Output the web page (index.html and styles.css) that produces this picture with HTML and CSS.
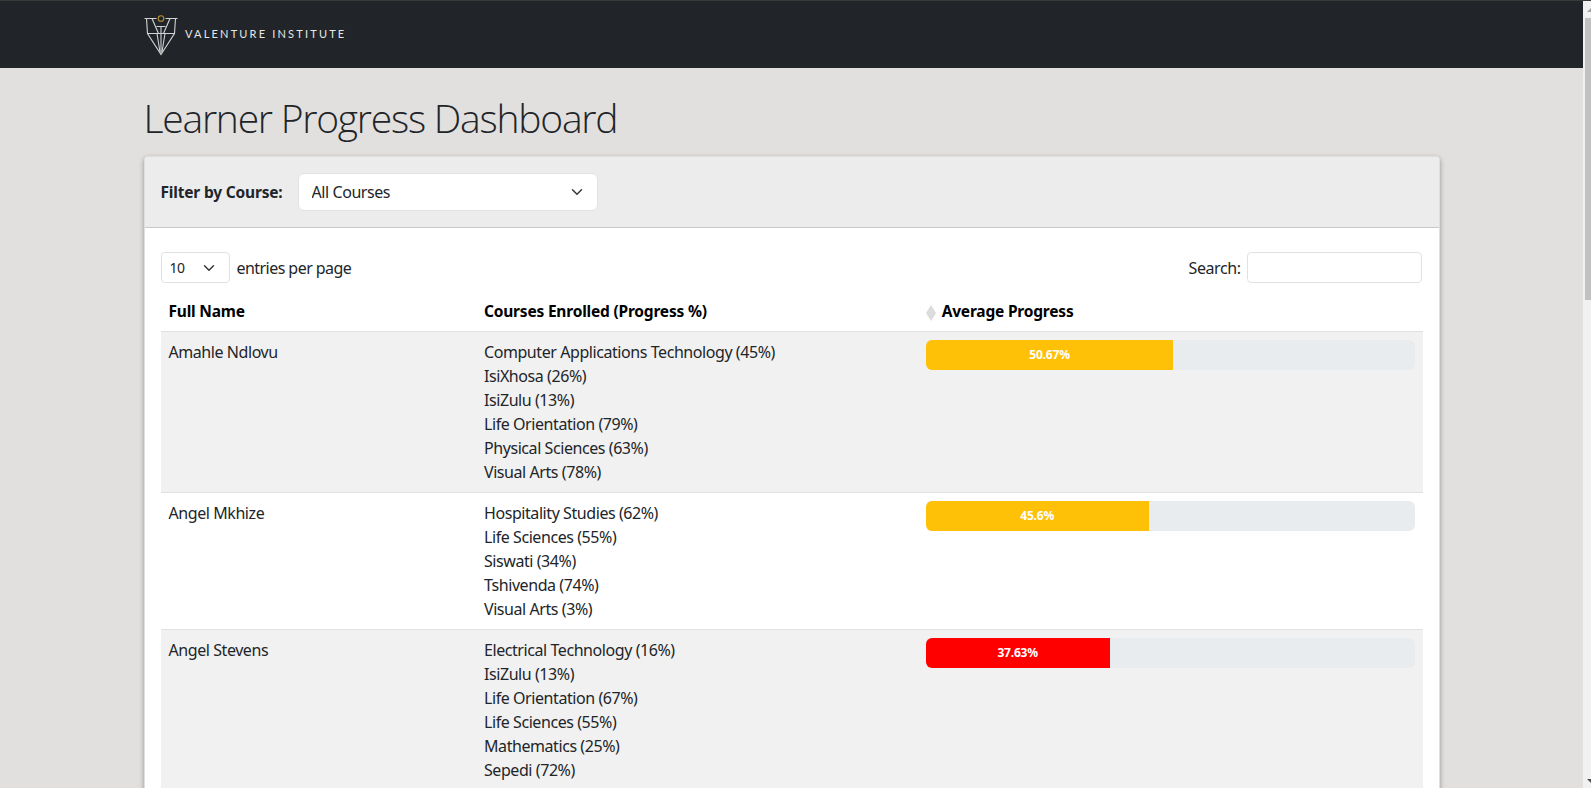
FILE: index.html
```html
<!DOCTYPE html>
<html lang="en">
<head>
<meta charset="utf-8">
<title>Learner Progress Dashboard</title>
<link rel="stylesheet" href="styles.css">
</head>
<body>
<div class="page">
  <header class="navbar">
    <svg class="logo" width="34" height="42" viewBox="0 0 34 42" fill="none" stroke="#d2d3d4" stroke-width="1.1">
      <path d="M0.5 4.5H12.5M21.5 4.5H33.5M12.5 12.5H21.5M17 12.5V39"/>
      <path d="M2.5 4.5L3.5 19.5L17 40.5L30.5 19.5L31.5 4.5"/>
      <path d="M8 4.5L14.5 19.5M26 4.5L19.5 19.5M13 19.5L16 38M21 19.5L18 38M3.5 19.5H30.5"/>
      <circle cx="17" cy="4.5" r="2.8" stroke="#b8912f"/>
    </svg>
    <span class="brand">VALENTURE INSTITUTE</span>
  </header>
  <main class="main">
    <h1 class="title">Learner Progress Dashboard</h1>
    <section class="card">
      <div class="card-header">
        <label class="filter-label" for="course">Filter by Course:</label>
        <select class="filter-select" id="course"><option>All Courses</option></select>
      </div>
      <div class="card-body">
        <div class="controls">
          <div class="per-page">
            <select class="length-select"><option>10</option></select>
            <span class="per-page-text">entries per page</span>
          </div>
          <div class="search">
            <label for="search">Search:</label>
            <input class="search-input" id="search" type="search">
          </div>
        </div>
        <table class="table">
          <colgroup><col class="col-name"><col class="col-courses"><col class="col-progress"></colgroup>
          <thead>
            <tr>
              <th>Full Name</th>
              <th>Courses Enrolled (Progress %)</th>
              <th><div class="sort-head"><svg class="sort-icon" width="10" height="16" viewBox="0 0 10 16"><path d="M5 0L10 8L5 16L0 8Z" fill="#dcdcdc"/></svg>Average Progress</div></th>
            </tr>
          </thead>
          <tbody>
            <tr class="striped">
              <td>Amahle Ndlovu</td>
              <td>Computer Applications Technology (45%)<br>IsiXhosa (26%)<br>IsiZulu (13%)<br>Life Orientation (79%)<br>Physical Sciences (63%)<br>Visual Arts (78%)</td>
              <td><div class="progress"><div class="bar bar-warning" style="width:50.67%">50.67%</div></div></td>
            </tr>
            <tr>
              <td>Angel Mkhize</td>
              <td>Hospitality Studies (62%)<br>Life Sciences (55%)<br>Siswati (34%)<br>Tshivenda (74%)<br>Visual Arts (3%)</td>
              <td><div class="progress"><div class="bar bar-warning" style="width:45.6%">45.6%</div></div></td>
            </tr>
            <tr class="striped">
              <td>Angel Stevens</td>
              <td>Electrical Technology (16%)<br>IsiZulu (13%)<br>Life Orientation (67%)<br>Life Sciences (55%)<br>Mathematics (25%)<br>Sepedi (72%)</td>
              <td><div class="progress"><div class="bar bar-danger" style="width:37.63%">37.63%</div></div></td>
            </tr>
          </tbody>
        </table>
      </div>
    </section>
  </main>
</div>
<div class="scrollbar">
  <span class="arrow arrow-up"></span>
  <span class="thumb"></span>
  <span class="arrow arrow-down"></span>
</div>
</body>
</html>
```
FILE: styles.css
```css
* { box-sizing: border-box; }
html, body { height: 100%; }
body {
  margin: 0;
  display: flex;
  overflow: hidden;
  background: #e1e0de;
  color: #212529;
  font-family: "Noto Sans", "Open Sans", sans-serif;
  font-size: 16px;
  line-height: 24px;
  letter-spacing: -0.43px;
  border-top: 1px solid #3a3a3a;
}
.page { flex: 1; min-width: 0; height: 100%; overflow: hidden; }
.navbar {
  height: 67px;
  background: #212529;
  display: flex;
  align-items: center;
  padding: 0 0 0 143.5px;
}
.logo { display: block; }
.brand {
  margin: 0 0 2px 7.5px;
  color: #e6e6e6;
  font-family: Lato, sans-serif;
  font-size: 11px;
  letter-spacing: 2.19px;
  line-height: 14px;
}
.main { width: 1296px; margin-left: 143.5px; padding-top: 24px; }
.title {
  margin: 0 0 14px;
  padding-top: 2px;
  font-family: "Open Sans", "Noto Sans", sans-serif;
  font-weight: 300;
  font-size: 39px;
  line-height: 48px;
  letter-spacing: -1.23px;
  color: #212529;
}
.card {
  background: #fff;
  border: 1px solid rgba(0,0,0,.125);
  border-radius: 4px;
  box-shadow: 0 2px 5px rgba(0,0,0,.35);
}
.card-header {
  display: flex;
  align-items: center;
  height: 71px;
  padding: 16px;
  background: #ececec;
  border-bottom: 1px solid #c9c9c9;
  border-radius: 3px 3px 0 0;
}
.filter-label { font-weight: 700; font-size: 15.5px; margin-right: 15px; letter-spacing: -0.18px; }
select, input { font-family: inherit; color: #212529; letter-spacing: inherit; }
.filter-select, .length-select {
  appearance: none;
  -webkit-appearance: none;
  background-color: #fff;
  background-image: url("data:image/svg+xml,%3Csvg xmlns='http://www.w3.org/2000/svg' viewBox='0 0 16 16'%3E%3Cpath fill='none' stroke='%23343a40' stroke-linecap='round' stroke-linejoin='round' stroke-width='2' d='M2 5l6 6 6-6'/%3E%3C/svg%3E");
  background-repeat: no-repeat;
  background-size: 16px 12px;
  border: 1px solid #dee2e6;
}
.filter-select {
  width: 300px;
  height: 38px;
  padding: 0 36px 0 13px;
  font-size: 16px;
  border-radius: 6px;
  background-position: right 12px center;
}
.card-body { padding: 24px 16px 16px; }
.controls { display: flex; justify-content: space-between; height: 31px; margin-bottom: 8px; }
.per-page, .search { display: flex; align-items: center; }
.per-page-text { letter-spacing: -0.55px; }
.length-select {
  width: 69px;
  height: 31px;
  padding: 0 28px 0 8px;
  font-size: 14px;
  border-radius: 4px;
  background-position: right 12px center;
  margin-right: 7px;
}
.search label { margin-right: 6px; }
.search-input {
  width: 175px;
  height: 31px;
  margin-right: 1px;
  border: 1px solid #dee2e6;
  border-radius: 4px;
  background: #fff;
  outline: none;
}
.table { width: 100%; border-collapse: collapse; table-layout: fixed; }
.col-name { width: 25%; }
.col-courses { width: 35%; }
.col-progress { width: 40%; }
.table th {
  text-align: left;
  padding: 8px;
  color: #000;
  font-weight: 700;
  font-size: 15.5px;
  letter-spacing: -0.2px;
  border-bottom: 1px solid #dee2e6;
}
.table td { padding: 8px; vertical-align: top; border-bottom: 1px solid #dee2e6; color: #212529; }
.striped td { background: #f1f1f1; }
.sort-head { display: flex; align-items: center; }
.sort-icon { margin: 3px 6px 0 0; flex: none; }
.progress {
  display: flex;
  height: 30px;
  background: #e9ecef;
  border-radius: 6px;
  overflow: hidden;
}
.bar {
  display: flex;
  align-items: center;
  justify-content: center;
  color: #fff;
  font-size: 12px;
  font-weight: 700;
  letter-spacing: -0.2px;
}
.bar-warning { background: #ffc107; }
.bar-danger { background: #f00; }
.scrollbar {
  flex: none;
  width: 8px;
  height: 100%;
  background: #f1f1f1;
  display: flex;
  flex-direction: column;
  align-items: flex-start;
  overflow: hidden;
}
.arrow {
  display: block;
  flex: none;
  width: 0;
  height: 0;
  border-left: 4px solid transparent;
  border-right: 4px solid transparent;
}
.arrow-up { margin-top: 7px; margin-left: 4px; border-bottom: 4px solid #a3a3a3; }
.thumb { flex: none; width: 6px; height: 282px; margin: 6px 0 0 2px; background: #c1c1c1; }
.arrow-down { margin-top: 479px; margin-left: 4px; border-top: 4px solid #505050; }
```
